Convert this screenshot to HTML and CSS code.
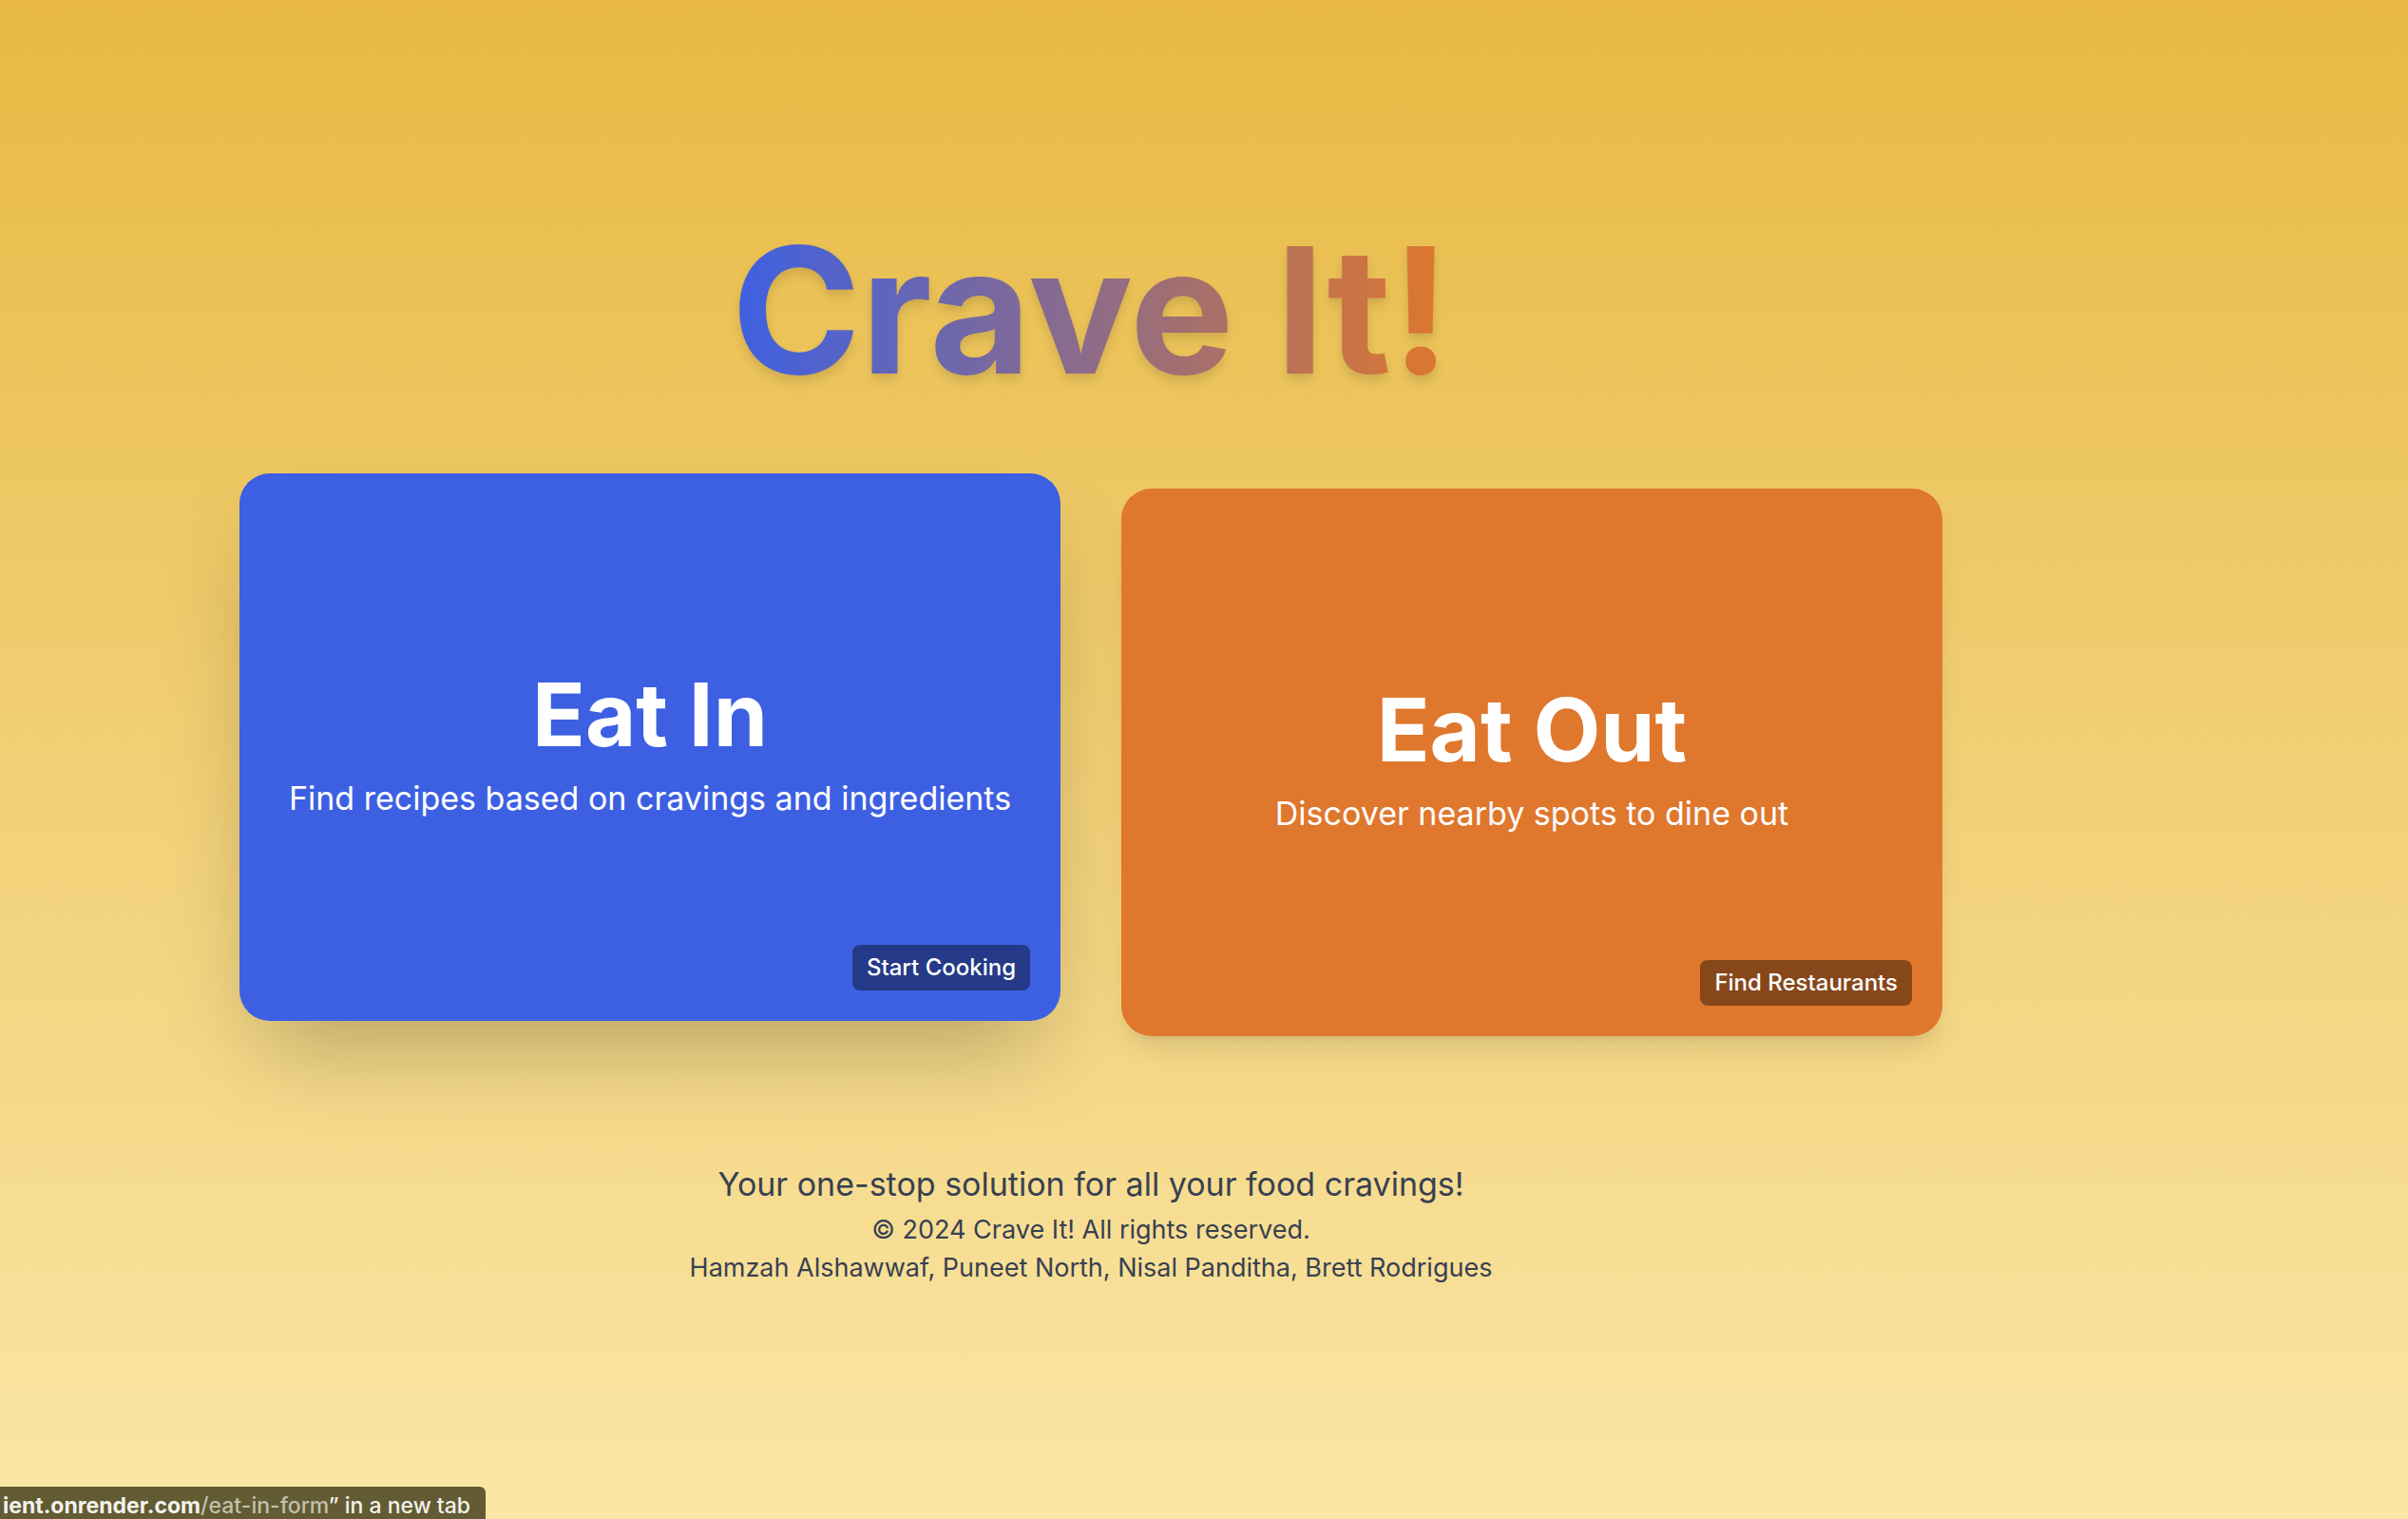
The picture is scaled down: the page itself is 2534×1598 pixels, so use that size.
FILE: index.html
```html
<!DOCTYPE html>
<html lang="en">
<head>
  <meta charset="utf-8">
  <meta name="viewport" content="width=device-width, initial-scale=1">
  <title>Crave It!</title>
  <link rel="stylesheet" href="styles.css">
</head>
<body>
  <div class="page">
    <header>
      <h1 class="title">Crave It!</h1>
    </header>
    <main class="cards">
      <a class="card card-in" href="/eat-in-form">
        <h2 class="card-title">Eat In</h2>
        <p class="card-text">Find recipes based on cravings and ingredients</p>
        <span class="badge">Start Cooking</span>
      </a>
      <a class="card card-out" href="/eat-out-form">
        <h2 class="card-title">Eat Out</h2>
        <p class="card-text">Discover nearby spots to dine out</p>
        <span class="badge">Find Restaurants</span>
      </a>
    </main>
    <footer class="footer">
      <p class="tagline">Your one-stop solution for all your food cravings!</p>
      <p>© 2024 Crave It! All rights reserved.</p>
      <p>Hamzah Alshawwaf, Puneet North, Nisal Panditha, Brett Rodrigues</p>
    </footer>
  </div>
  <div class="status"><b>ient.onrender.com</b><span class="path">/eat-in-form</span>” in a new tab</div>
</body>
</html>
```
FILE: styles.css
```css
* {
  box-sizing: border-box;
  margin: 0;
}

body {
  min-height: 100vh;
  background: linear-gradient(#e7b943, #fbe6a6);
  font-family: Inter, "Liberation Sans", sans-serif;
}

.page {
  min-height: 100vh;
  padding: 230px 238px 64px 0;
  display: flex;
  flex-direction: column;
  align-items: center;
}

.title {
  font-size: 184px;
  line-height: 192px;
  font-weight: 700;
  color: transparent;
  background: linear-gradient(to right, #3d60e2, #df772d);
  -webkit-background-clip: text;
  background-clip: text;
  filter: drop-shadow(0 8px 6px rgba(0, 0, 0, 0.07)) drop-shadow(0 4px 4px rgba(0, 0, 0, 0.06));
}

.cards {
  width: 100%;
  max-width: 1792px;
  margin-top: 92px;
  display: grid;
  grid-template-columns: 1fr 1fr;
  gap: 64px;
}

.card {
  position: relative;
  min-height: 576px;
  padding: 32px;
  display: flex;
  flex-direction: column;
  align-items: center;
  justify-content: center;
  gap: 12px;
  border-radius: 32px;
  color: #fff;
  text-align: center;
  text-decoration: none;
}

.card-in {
  background: #3d60e2;
  box-shadow: 0 50px 100px -24px rgba(0, 0, 0, 0.25);
  transform: translateY(-16px);
}

.card-out {
  background: #df772d;
  box-shadow: 0 20px 30px -6px rgba(0, 0, 0, 0.1), 0 8px 12px -8px rgba(0, 0, 0, 0.1);
}

.card-title {
  font-size: 92px;
  line-height: 96px;
  font-weight: 700;
}

.card-text {
  font-size: 34px;
  line-height: 56px;
}

.badge {
  position: absolute;
  right: 32px;
  bottom: 32px;
  padding: 0 15px;
  border-radius: 8px;
  background: rgba(0, 0, 0, 0.4);
  font-size: 24px;
  line-height: 48px;
  font-weight: 500;
}

.footer {
  margin-top: 128px;
  color: #374151;
  font-size: 27px;
  line-height: 40px;
  text-align: center;
}

.tagline {
  font-size: 34px;
  line-height: 56px;
}

/* Link preview pinned to the window's lower left corner */
.status {
  position: fixed;
  left: 0;
  bottom: 0;
  height: 34px;
  padding: 0 16px 0 3px;
  overflow: hidden;
  border-top-right-radius: 6px;
  background: #625b33;
  color: #f3f2ec;
  font-size: 23px;
  line-height: 40px;
  font-weight: 500;
  white-space: nowrap;
}

.status b {
  font-weight: 700;
}

.path {
  color: #c3bfab;
}
```
